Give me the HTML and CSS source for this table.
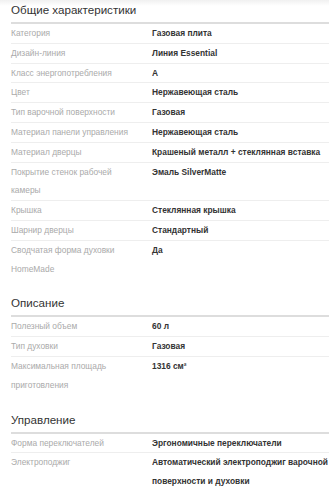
FILE: index.html
```html
<!DOCTYPE html>
<html>
  <head>
    <meta charset="UTF-8" />
    <title>Характеристики</title>
    <link rel="stylesheet" href="styles.css">
  </head>
  <body>
    <div class="specs">
      <h2>Общие характеристики</h2>
      <table>
        <tr><td>Категория</td><td>Газовая плита</td></tr>
        <tr><td>Дизайн-линия</td><td>Линия Essential</td></tr>
        <tr><td>Класс энергопотребления</td><td>A</td></tr>
        <tr><td>Цвет</td><td>Нержавеющая сталь</td></tr>
        <tr><td>Тип варочной поверхности</td><td>Газовая</td></tr>
        <tr><td>Материал панели управления</td><td>Нержавеющая сталь</td></tr>
        <tr><td>Материал дверцы</td><td>Крашеный металл + стеклянная вставка</td></tr>
        <tr><td>Покрытие стенок рабочей камеры</td><td>Эмаль SilverMatte</td></tr>
        <tr><td>Крышка</td><td>Стеклянная крышка</td></tr>
        <tr><td>Шарнир дверцы</td><td>Стандартный</td></tr>
        <tr><td>Сводчатая форма духовки HomeMade</td><td>Да</td></tr>
      </table>

      <h2>Описание</h2>
      <table>
        <tr><td>Полезный объем</td><td>60 л</td></tr>
        <tr><td>Тип духовки</td><td>Газовая</td></tr>
        <tr><td>Максимальная площадь приготовления</td><td>1316 см²</td></tr>
      </table>

      <h2>Управление</h2>
      <table>
        <tr><td>Форма переключателей</td><td>Эргономичные переключатели</td></tr>
        <tr><td>Электроподжиг</td><td>Автоматический электроподжиг варочной поверхности и духовки</td></tr>
      </table>
    </div>
  </body>
</html>
```

FILE: styles.css
```css
body {
  margin: 0;
  background: #fff;
  font-family: "Liberation Sans", Arial, sans-serif;
  overflow: hidden;
}
body:before {
  content: "";
  display: block;
  height: 6px;
  margin-bottom: -6px;
  background: linear-gradient(#f0f0f0, #fff);
}
.specs {
  width: 318px;
  padding: 2px 0 0 11px;
}
.specs h2 {
  margin: 0;
  padding-bottom: 4px;
  font-size: 11.6px;
  line-height: 16px;
  font-weight: normal;
  color: #333;
  border-bottom: 2px solid #ddd;
}
.specs table {
  width: 100%;
  border-collapse: collapse;
  table-layout: fixed;
  margin-bottom: 17px;
}
.specs td {
  padding: 0;
  line-height: 18.8px;
  vertical-align: top;
  border-bottom: 1px solid #eee;
}
.specs tr:last-child td {
  border-bottom: none;
}
.specs td:first-child {
  width: 128px;
  padding-right: 13px;
  font-size: 8.4px;
  color: #aaa;
}
.specs td:last-child {
  font-size: 8.4px;
  font-weight: bold;
  color: #333;
}
```
